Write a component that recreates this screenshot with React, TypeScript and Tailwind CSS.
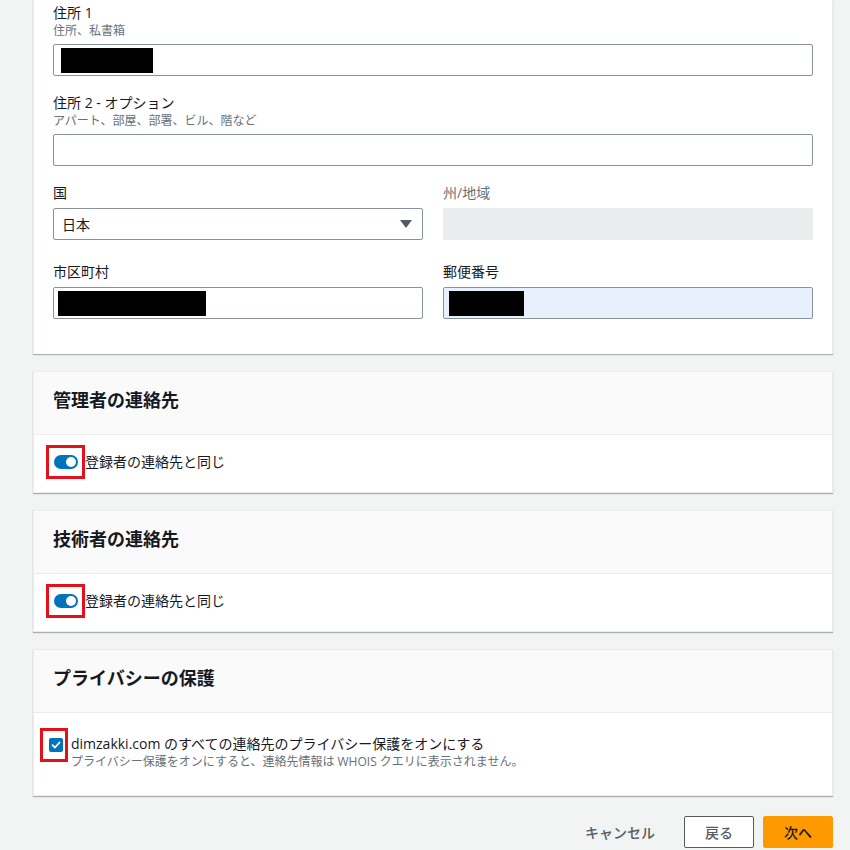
import { ReactNode } from 'react'

const font = { fontFamily: '"Open Sans", "Noto Sans CJK JP", "Noto Sans", sans-serif' }

function Redacted({ w, left }: { w: number; left: number }) {
  return <span className="block h-[25px] bg-black" style={{ width: w, marginLeft: left }}></span>
}

function Field({ label, hint, children, muted }: { label: string; hint?: string; children: ReactNode; muted?: boolean }) {
  return (
    <div>
      <div className={`text-[14px] leading-[20px] ${muted ? 'text-[#687078]' : 'text-[#16191f]'}`}>{label}</div>
      {hint && <div className="text-[12px] leading-[16px] text-[#687078]">{hint}</div>}
      <div className="mt-[5px]">{children}</div>
    </div>
  )
}

function Card({ title, children }: { title: string; children: ReactNode }) {
  return (
    <div className="mt-[17px] bg-white border border-[#eaeded] shadow-[0_1px_1px_0_rgba(0,28,36,0.3)]">
      <div className="h-[63px] pt-[14px] pl-[19px] bg-[#fafafa] border-b border-[#eaeded]">
        <h2 className="text-[18px] leading-[28px] font-bold text-[#16191f]">{title}</h2>
      </div>
      {children}
    </div>
  )
}

function Toggle() {
  return (
    <div className="flex items-center pt-[10px] pb-[13px] pl-[12px]">
      <span className="flex items-center justify-center w-[39px] h-[34px] border-[3px] border-[#e3111b]">
        <span className="flex items-center justify-end w-[24px] h-[14px] rounded-full bg-[#0073bb] pr-[2px]">
          <span className="w-[10px] h-[10px] rounded-full bg-white"></span>
        </span>
      </span>
      <span className="text-[14px] leading-[20px] text-[#16191f]">登録者の連絡先と同じ</span>
    </div>
  )
}

export default function App() {
  const input = 'h-[32px] rounded-[2px] border border-[#879596] bg-white flex items-center'

  return (
    <div className="min-h-[850px] bg-[#f2f3f3] text-[#16191f]" style={font}>
      <div className="ml-[33px] w-[800px]">
        <div className="bg-white border-x border-[#eaeded] shadow-[0_1px_1px_0_rgba(0,28,36,0.3)] pt-[3px] pb-[35px] px-[19px]">
          <Field label="住所 1" hint="住所、私書箱">
            <div className={input}>
              <Redacted w={92} left={7} />
            </div>
          </Field>
          <div className="mt-[17px]">
            <Field label="住所 2 - オプション" hint="アパート、部屋、部署、ビル、階など">
              <div className={input}></div>
            </Field>
          </div>
          <div className="mt-[17px] grid grid-cols-2 gap-x-[20px]">
            <Field label="国">
              <div className={`${input} justify-between px-[8px]`}>
                <span className="text-[14px] text-[#16191f]">日本</span>
                <svg width="12" height="8" viewBox="0 0 12 8" className="mr-[2px]">
                  <path d="M0 0 H12 L6 8 Z" fill="#545b64" />
                </svg>
              </div>
            </Field>
            <Field label="州/地域" muted>
              <div className="h-[32px] rounded-[2px] border border-[#eaeded] bg-[#eaeded]"></div>
            </Field>
          </div>
          <div className="mt-[22px] grid grid-cols-2 gap-x-[20px]">
            <Field label="市区町村">
              <div className={input}>
                <Redacted w={148} left={4} />
              </div>
            </Field>
            <Field label="郵便番号">
              <div className="h-[32px] rounded-[2px] border border-[#879596] bg-[#e8f0fe] flex items-center">
                <Redacted w={75} left={5} />
              </div>
            </Field>
          </div>
        </div>

        <Card title="管理者の連絡先">
          <Toggle />
        </Card>

        <Card title="技術者の連絡先">
          <Toggle />
        </Card>

        <Card title="プライバシーの保護">
          <div className="flex items-start pt-[15px] pb-[25px] pl-[6px]">
            <span className="flex items-center justify-start w-[28px] h-[34px] border-[3px] border-[#e3111b] pl-[6px]">
              <span className="flex items-center justify-center w-[14px] h-[14px] rounded-[2px] bg-[#0073bb]">
                <svg width="10" height="10" viewBox="0 0 10 10">
                  <path d="M1.5 5.2 L4 7.5 L8.5 2.5" fill="none" stroke="white" strokeWidth="1.8" strokeLinecap="round" strokeLinejoin="round" />
                </svg>
              </span>
            </span>
            <div className="ml-[3px] mt-[6px]">
              <div className="text-[14px] leading-[20px] text-[#16191f]">dimzakki.com のすべての連絡先のプライバシー保護をオンにする</div>
              <div className="text-[12px] leading-[16px] text-[#687078]">プライバシー保護をオンにすると、連絡先情報は WHOIS クエリに表示されません。</div>
            </div>
          </div>
        </Card>

        <div className="mt-[20px] flex justify-end items-center gap-[9px]">
          <button className="h-[32px] px-[20px] text-[14px] font-medium text-[#545b64]">キャンセル</button>
          <button className="h-[32px] w-[70px] rounded-[2px] border border-[#545b64] bg-white text-[14px] font-medium text-[#545b64]">戻る</button>
          <button className="h-[32px] w-[70px] rounded-[2px] border border-[#ff9900] bg-[#ff9900] text-[14px] font-medium text-[#16191f]">次へ</button>
        </div>
      </div>
    </div>
  )
}
